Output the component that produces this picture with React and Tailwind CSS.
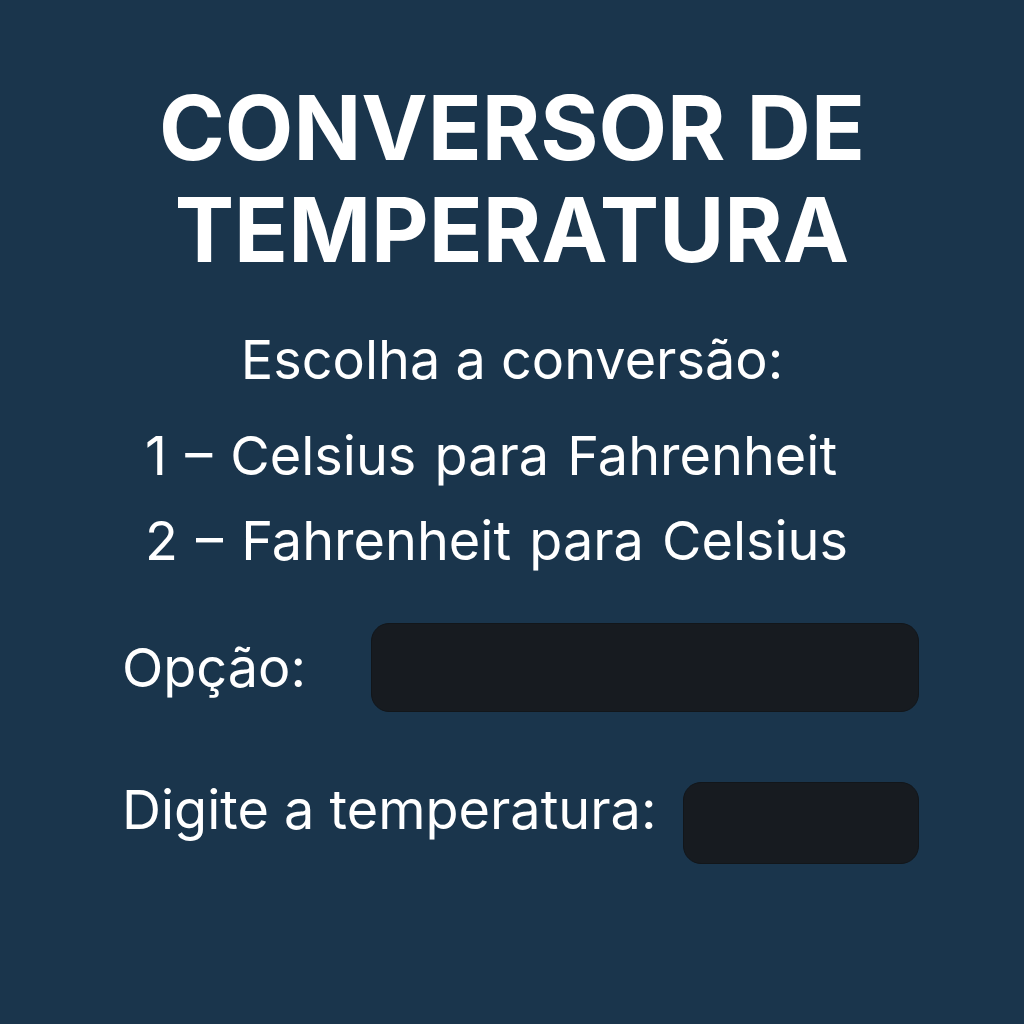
import React from 'react';

const App = () => {
  return (
    <div
      className="w-[1024px] h-[1024px] bg-[#1a354c] text-white flex flex-col items-center"
      style={{ fontFamily: 'Inter, "Noto Sans", sans-serif' }}
    >
      <h1 className="mt-[77px] text-[89px] leading-[102px] font-bold text-center">
        CONVERSOR DE
        <br />
        TEMPERATURA
      </h1>

      <p className="mt-[48px] text-[54px] leading-[62px] text-center">Escolha a conversão:</p>

      <div className="mt-[22px] w-full pl-[145px] flex flex-col items-start text-[54px] leading-[85px] [word-spacing:3px]">
        <span>1 – Celsius para Fahrenheit</span>
        <span>2 – Fahrenheit para Celsius</span>
      </div>

      <div className="mt-[40px] w-full pl-[122px] pr-[105px] flex flex-col gap-[66px] text-[54px] leading-[64px]">
        <div className="flex items-center justify-between">
          <label>Opção:</label>
          <div className="w-[548px] h-[89px] rounded-[18px] bg-[#171b20] border border-[#12161a]" />
        </div>
        <div className="flex items-center gap-[26px]">
          <label className="whitespace-nowrap mb-[26px]">Digite a temperatura:</label>
          <div className="flex-1 h-[82px] rounded-[18px] bg-[#171b20] border border-[#12161a]" />
        </div>
      </div>
    </div>
  );
};

export default App;
